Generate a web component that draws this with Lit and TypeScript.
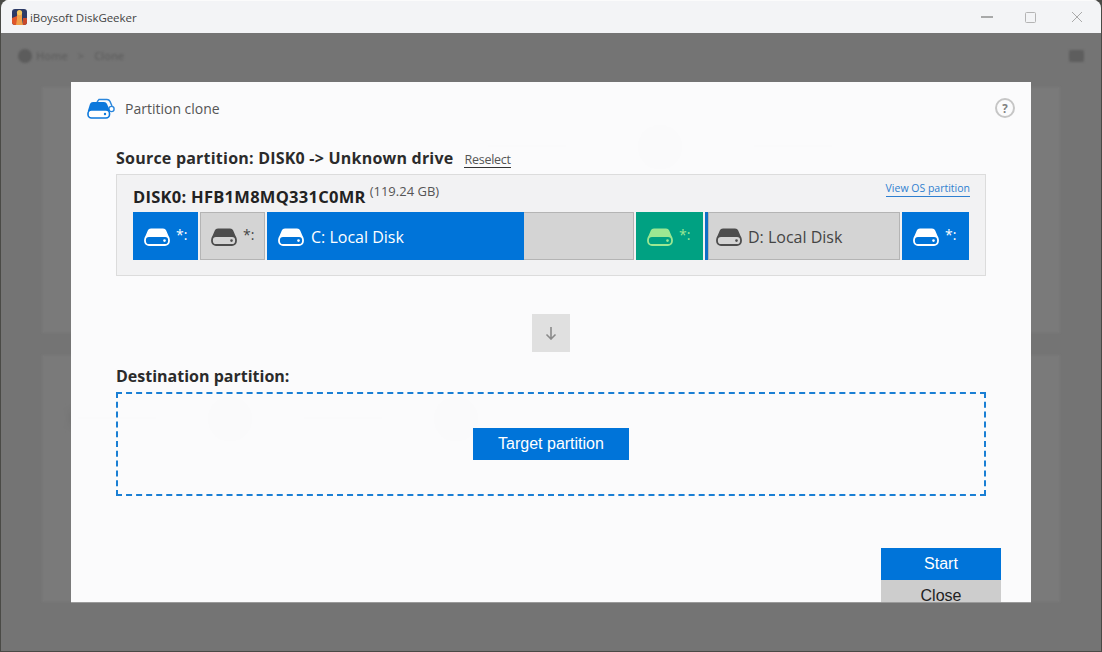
import { LitElement, html, css, svg } from "lit";
import { customElement } from "lit/decorators.js";

const diskIcon = (fill: string, bg: string) => html`<svg class="disk" width="26" height="18" viewBox="0 0 26 18">
  ${svg`<path d="M7 .5H19C20.6.5 21.6 1.2 22.2 2.6L25.4 10H.6L3.8 2.6C4.4 1.2 5.4.5 7 .5Z" fill="${fill}"/>
  <rect x="1" y="8" width="24" height="9" rx="4" fill="${bg}" stroke="${fill}" stroke-width="1.8"/>
  <circle cx="20.5" cy="12.6" r="1.3" fill="${fill}"/>`}
</svg>`;

@customElement("app-root")
export class AppRoot extends LitElement {
  static styles = css`
    :host { display: block; width: 1102px; height: 652px; background: #4a4a46; font-family: "Open Sans", "Noto Sans", sans-serif; overflow: hidden; }
    .window { position: relative; height: 651px; border-radius: 8px 8px 0 0; overflow: hidden; display: flex; flex-direction: column; background: #747474; margin: 0 1px; }
    .titlebar { flex: none; height: 33px; background: #f3f4f6; border-top: 1px solid #fbfbfb; box-sizing: border-box; display: flex; align-items: center; padding-left: 11px; }
    .app-name { font-size: 11.5px; color: #444; margin-left: 3px; letter-spacing: -0.005em; }
    .controls { margin-left: auto; display: flex; align-items: center; margin-right: 18px; gap: 29px; }
    .controls svg { display: block; }
    .page { flex: 1; display: flex; flex-direction: column; padding: 0 41px; }
    .crumbs { flex: none; height: 54px; display: flex; align-items: center; gap: 10px; margin: 0 -24px; padding-bottom: 9px; box-sizing: border-box; font-size: 11px; font-weight: 600; color: #606060; filter: blur(1.1px); }
    .crumbs i { width: 14px; height: 14px; border-radius: 50%; background: #5c5c5c; margin-right: -6px; }
    .crumbs u { margin-left: auto; width: 15px; height: 12px; background: #5e5e5e; border-radius: 2px; }
    .panel { background: #7a7a7a; box-sizing: border-box; display: flex; filter: blur(1px); }
    .panel.top { flex: none; height: 246px; padding: 32px 0 0 440px; gap: 60px; }
    .panel.bottom { flex: none; height: 247px; margin-top: 22px; padding: 36px 0 0 30px; gap: 40px; }
    .ghost-round { width: 56px; height: 56px; border-radius: 50%; background: #6c6c6c; flex: none; filter: blur(4px); }
    .ghost-line { width: 90px; height: 14px; background: #6c6c6c; flex: none; margin-top: 20px; filter: blur(4px); }
    .modal { position: absolute; left: 70px; top: 82px; width: 960px; height: 520px; background: rgba(254, 254, 255, 0.975); overflow: hidden; display: flex; flex-direction: column; box-shadow: 0 1px 0 #9a9a9a; }
    .m-head { flex: none; height: 52px; display: flex; align-items: center; padding: 0 16px; }
    .m-title { margin-left: 10px; font-size: 14px; color: #555; }
    .help { margin-left: auto; width: 20px; height: 20px; box-sizing: border-box; border: 2px solid #c6c6c6; border-radius: 50%; display: flex; align-items: center; justify-content: center; font-size: 11.5px; font-weight: 700; color: #808080; }
    .content { display: flex; flex-direction: column; width: 870px; margin-left: 45px; }
    .h { font-size: 16px; font-weight: 700; color: #2b2b2b; height: 20px; line-height: 20px; white-space: nowrap; }
    .h.src { letter-spacing: 0.22px; }
    .source { margin-top: 14px; display: flex; align-items: center; }
    .reselect { margin-left: 11px; font-size: 12.5px; line-height: 15px; color: #555; border-bottom: 1px solid #333; margin-top: 3px; letter-spacing: -0.02em; }
    .disk-panel { margin-top: 6px; height: 102px; box-sizing: border-box; background: #f2f2f3; border: 1px solid #dcdcdc; padding: 0 16px; display: flex; flex-direction: column; }
    .disk-head { flex: none; height: 37px; display: flex; align-items: flex-start; padding-top: 11px; box-sizing: border-box; }
    .disk-name { font-size: 16.5px; font-weight: 700; color: #222; line-height: 22px; letter-spacing: 0.27px; white-space: nowrap; }
    .size { font-size: 13px; color: #555; margin-left: 4px; line-height: 12px; margin-top: -1px; }
    .os { margin-left: auto; margin-right: -1px; font-size: 10.5px; line-height: 13px; color: #2f7fd0; border-bottom: 1px solid #2f7fd0; padding-bottom: 1px; margin-top: -4px; }
    .bars { display: flex; gap: 2px; height: 48px; }
    .bar { box-sizing: border-box; display: flex; align-items: center; flex: none; overflow: hidden; padding-top: 2px; }
    .bar .disk { margin-left: 11px; flex: none; }
    .blue { background: #0074d9; color: #fff; }
    .grey { background: #d4d4d4; color: #444; box-shadow: inset 0 0 0 1px #b4b4b4; }
    .green { background: #00a182; color: #9ce892; }
    .mark { margin-left: 6px; font-size: 14px; line-height: 1; position: relative; top: -2px; }
    .label { margin-left: 8px; font-size: 16px; white-space: nowrap; }
    .c { padding: 0; width: 367px; }
    .c-used { background: #0074d9; color: #fff; width: 257px; height: 100%; display: flex; align-items: center; flex: none; padding-top: 2px; box-sizing: border-box; }
    .c-used .disk { margin-left: 11px; }
    .c-used .label { margin-left: 7px; }
    .c-free { flex: 1; height: 100%; }
    .d { border-left: 3px solid #0f6fc6; }
    .d .disk { margin-left: 8px; }
    .d .label { margin-left: 6px; }
    .arrow { margin-top: 38px; align-self: center; width: 38px; height: 38px; background: #e0e0e0; display: flex; align-items: center; justify-content: center; }
    .dest { margin-top: 14px; }
    .target { margin-top: 6px; height: 104px; box-sizing: border-box; border: 2px dashed #1a7fd4; display: flex; align-items: center; justify-content: center; }
    .btn { font-family: "Liberation Sans", Arial, sans-serif; font-size: 16px; display: flex; align-items: center; justify-content: center; flex: none; }
    .btn.target-btn { width: 156px; height: 32px; background: #0074d9; color: #fff; }
    .actions { display: flex; flex-direction: column; align-self: flex-end; margin: 52px 30px 0 0; width: 120px; }
    .btn.start { height: 32px; background: #0074d9; color: #fff; }
    .btn.close { height: 32px; background: #cdcdcd; color: #222; }
  `;

  render() {
    return html`<div class="window">
      <div class="titlebar">
        <svg width="15" height="16" viewBox="0 0 15 16">
          <rect width="15" height="16" rx="3" fill="#2c3a66"/>
          <path d="M0 9 5 7v9H3a3 3 0 0 1-3-3Z" fill="#e0562a"/>
          <path d="M5 3h5v7l1 6H4l1-6Z" fill="#f0a04a"/>
          <circle cx="7.5" cy="3.6" r="2.6" fill="#f6c75f"/>
          <path d="M11 9h4v4a3 3 0 0 1-3 3h-1Z" fill="#c9482a"/>
        </svg>
        <span class="app-name">iBoysoft DiskGeeker</span>
        <div class="controls">
          <svg width="12" height="12" viewBox="0 0 12 12"><path d="M0 6H12" stroke="#777" stroke-width="1.2"/></svg>
          <svg width="11" height="11" viewBox="0 0 11 11" style="margin-left:3px"><rect x=".5" y=".5" width="10" height="10" rx="1" fill="none" stroke="#b4b4b4"/></svg>
          <svg width="12" height="12" viewBox="0 0 12 12" style="margin-left:6px"><path d="M1 1 11 11M11 1 1 11" stroke="#aaa" stroke-width="1"/></svg>
        </div>
      </div>
      <div class="page">
        <div class="crumbs"><i></i><span>Home</span><span>&gt;</span><span>Clone</span><u></u></div>
        <div class="panel top"><div class="ghost-line"></div><div class="ghost-round"></div><div class="ghost-line"></div></div>
        <div class="panel bottom"><div class="ghost-line"></div><div class="ghost-round"></div><div class="ghost-line"></div><div class="ghost-round"></div></div>
      </div>
      <div class="modal">
        <div class="m-head">
          <svg width="28" height="21" viewBox="0 0 28 21">
            <path d="M10 4 12 1.5H20C21.5 1.5 22.4 2.2 23 3.4L25 8" fill="none" stroke="#2a86dc" stroke-width="1.4"/>
            <circle cx="24.5" cy="11" r="2.6" fill="#fff" stroke="#2a86dc" stroke-width="1.4"/>
            <path d="M6 4H17C18.5 4 19.4 4.7 20 6L23 13H0.8L3 6C3.6 4.7 4.5 4 6 4Z" fill="#0c78dc"/>
            <rect x="1" y="12" width="21.5" height="8" rx="3.5" fill="#fff" stroke="#0c78dc" stroke-width="1.6"/>
            <circle cx="18" cy="16" r="1.2" fill="#0c78dc"/>
          </svg>
          <span class="m-title">Partition clone</span>
          <span class="help">?</span>
        </div>
        <div class="content">
          <div class="source">
            <span class="h src">Source partition: DISK0 -&gt; Unknown drive</span>
            <span class="reselect">Reselect</span>
          </div>
          <div class="disk-panel">
            <div class="disk-head">
              <span class="disk-name">DISK0: HFB1M8MQ331C0MR</span>
              <span class="size">(119.24 GB)</span>
              <span class="os">View OS partition</span>
            </div>
            <div class="bars">
              <div class="bar blue" style="width:65px">${diskIcon("#fff", "#0074d9")}<span class="mark">*:</span></div>
              <div class="bar grey" style="width:65px">${diskIcon("#4d4d4d", "#d4d4d4")}<span class="mark">*:</span></div>
              <div class="bar grey c">
                <div class="c-used">${diskIcon("#fff", "#0074d9")}<span class="label">C: Local Disk</span></div>
                <div class="c-free"></div>
              </div>
              <div class="bar green" style="width:67px">${diskIcon("#9ce892", "#00a182")}<span class="mark">*:</span></div>
              <div class="bar grey d" style="width:195px">${diskIcon("#4d4d4d", "#d4d4d4")}<span class="label">D: Local Disk</span></div>
              <div class="bar blue" style="width:67px">${diskIcon("#fff", "#0074d9")}<span class="mark">*:</span></div>
            </div>
          </div>
          <div class="arrow">
            <svg width="12" height="14" viewBox="0 0 12 14"><path d="M6 1V13M1.5 8.5 6 13l4.5-4.5" fill="none" stroke="#8a8a8a" stroke-width="1.6"/></svg>
          </div>
          <div class="h dest">Destination partition:</div>
          <div class="target"><div class="btn target-btn">Target partition</div></div>
        </div>
        <div class="actions">
          <div class="btn start">Start</div>
          <div class="btn close">Close</div>
        </div>
      </div>
    </div>`;
  }
}
